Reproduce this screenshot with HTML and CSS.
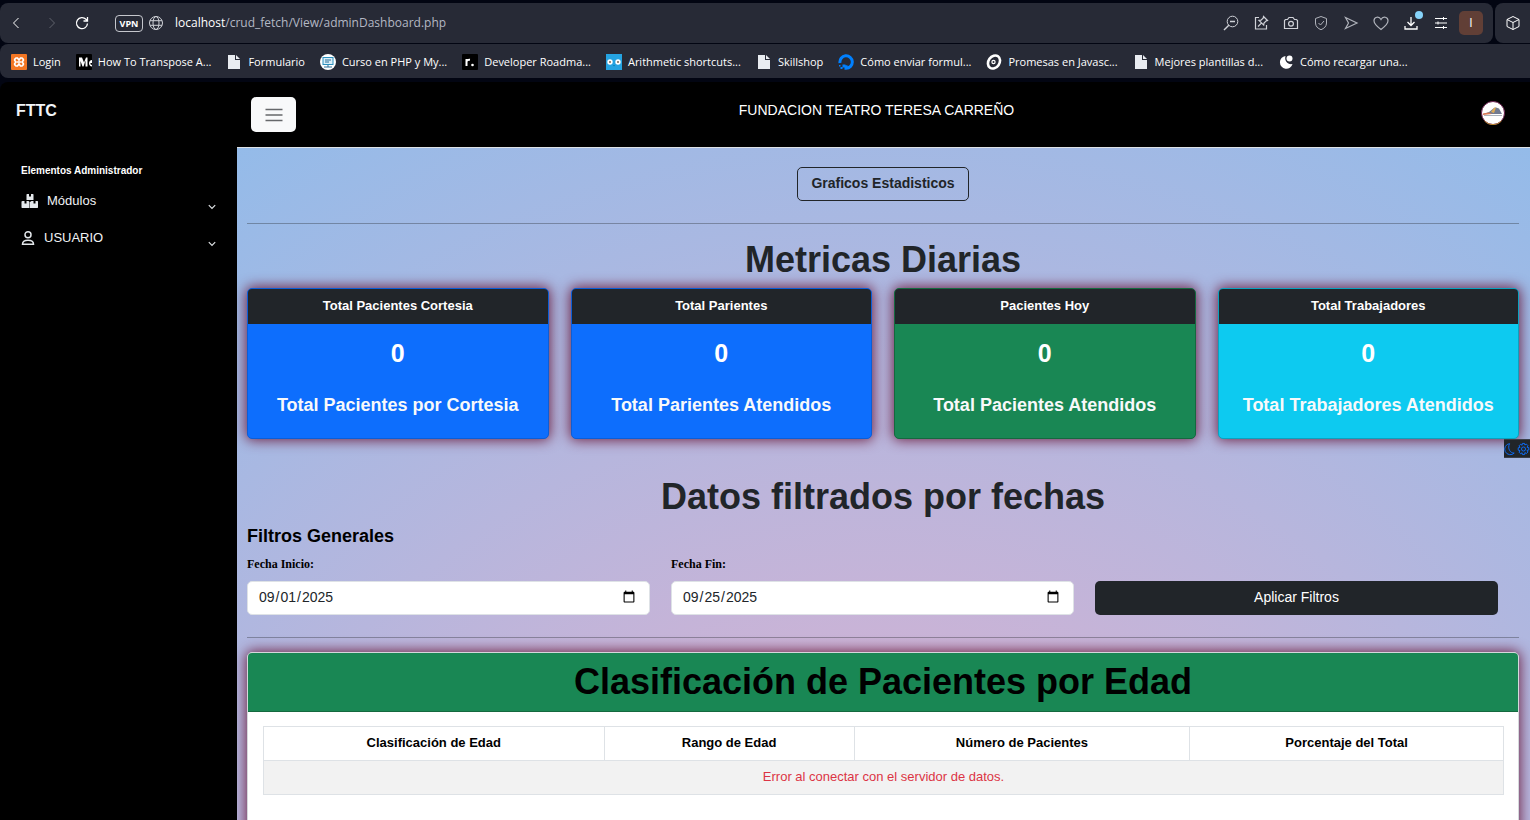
FILE: index.html
```html
<!DOCTYPE html>
<html lang="es">
<head>
<meta charset="utf-8">
<title>FTTC</title>
<link rel="stylesheet" href="styles.css">
</head>
<body>
<svg class="defs" aria-hidden="true">
  <symbol id="file" viewBox="0 0 16 16"><path fill="#e9ecf1" d="M2 1h7v5h5v9H2z"/><path fill="#e9ecf1" d="M10 1l4 4h-4z"/></symbol>
  <symbol id="chevron" viewBox="0 0 8 6"><path d="M.8 1.200L4 4.400l3.200-3.200" fill="none" stroke="#dfe3e6" stroke-width="1.200"/></symbol>
</svg>
<div class="browser">
  <div class="toolbar-row">
    <div class="toolbar">
      <button class="tool nav-btn" aria-label="Atrás"><svg viewBox="0 0 16 16"><path d="M10.500 3L5.500 8l5 5"/></svg></button>
      <button class="tool nav-btn dim" aria-label="Adelante"><svg viewBox="0 0 16 16"><path d="M5.500 3l5 5-5 5"/></svg></button>
      <button class="tool nav-btn reload" aria-label="Recargar"><svg viewBox="0 0 16 16"><path d="M13.500 8.500A5.500 5.500 0 1 1 12 4.300l1.500 1.500M13.500 2v4h-4" stroke-width="1.300"/></svg></button>
      <span class="vpn">VPN</span>
      <svg class="globe" viewBox="0 0 16 16"><circle cx="8" cy="8" r="6.500"/><ellipse cx="8" cy="8" rx="3" ry="6.500"/><path d="M2 5.700h12M2 10.300h12"/></svg>
      <div class="url"><b>localhost</b>/crud_fetch/View/adminDashboard.php</div>
      <div class="tools">
        <button class="tool" aria-label="Zoom"><svg viewBox="0 0 16 16"><circle cx="9.500" cy="6.500" r="5.300"/><path d="M5.800 10.200L1 15M7 6.500h5" stroke-width="1.400"/></svg></button>
        <button class="tool" aria-label="Editar"><svg viewBox="0 0 16 16"><path d="M6 2.500H2.500v11.500h11V10M5 11.500l3.200-3.200M10.500 1.500l4 4-1.200.3-2.300 2.300-.3 2L6 5.500l2-.3 2.300-2.300z" stroke-width="1.200"/></svg></button>
        <button class="tool" aria-label="Captura"><svg viewBox="0 0 16 16"><path d="M2.500 4.500h2L6 2.500h4l1.500 2h2l1 1v8h-13v-8z" stroke-width="1.200"/><circle cx="8" cy="8.700" r="2.400" stroke-width="1.200"/></svg></button>
        <button class="tool soft" aria-label="Protección"><svg viewBox="0 0 16 16"><path d="M8 1.500l5.500 2V8c0 3.500-2.500 5.500-5.500 6.700C5 13.500 2.500 11.500 2.500 8V3.500zM5.500 8l2 2 3.500-4"/></svg></button>
        <button class="tool soft" aria-label="Enviar"><svg viewBox="0 0 16 16"><path d="M2.500 2.500L14 8 2.500 13.500l3-5.500z" stroke-width="1.200"/></svg></button>
        <button class="tool soft" aria-label="Favorito"><svg viewBox="0 0 16 16"><path d="M8 14.500C4 11.500 1 9 1 5.800 1 1.800 6 .8 8 4.500 10 .8 15 1.800 15 5.800 15 9 12 11.500 8 14.500z" stroke-width="1.200"/></svg></button>
        <button class="tool bright download" aria-label="Descargas"><svg viewBox="0 0 16 16"><path d="M8 2v8M4.500 7L8 10.500 11.500 7M2 11v3h12v-3" stroke-width="1.300"/></svg></button>
        <button class="tool bright" aria-label="Ajustes"><svg viewBox="0 0 16 16"><path d="M2 3.500h12M2 8h12M2 12.500h12M10.500 2v3M5 6.500v3M10.500 11v3"/></svg></button>
        <button class="profile" aria-label="Perfil">I</button>
      </div>
    </div>
    <div class="side-tools"><button class="tool bright" aria-label="Extensiones"><svg viewBox="0 0 16 16"><path d="M8 1.500l6 3v7l-6 3-6-3v-7zM2 4.500l6 3 6-3M8 7.500v7"/></svg></button></div>
  </div>
  <nav class="bookmarks">
    <a href="#"><svg viewBox="0 0 16 16"><rect width="16" height="16" rx="1" fill="#f37623"/><path d="M5 4h1.500L8 6l1.500-2H11l1.300 1.300v1.200L11 8l1.300 1.500v1.200L11 12H9.500L8 10l-1.500 2H5l-1.300-1.300V9.500L5 8 3.700 6.500V5.300zM6 8h4" fill="none" stroke="#fff" stroke-width="1.700"/></svg>Login</a>
    <a href="#"><svg viewBox="0 0 16 16"><rect width="16" height="16" rx="1" fill="#000"/><path d="M3 3.500h3l2 5 2-5h1.500v9h-2v-6l-2 6h-1L4.500 7v5.500H3zM16 6c-4 0-4 6.500 0 6.500V11c-2-.5-1.500-1-1.500-2H16z" fill="#fff"/></svg>How To Transpose A...</a>
    <a href="#"><svg><use href="#file"/></svg>Formulario</a>
    <a href="#"><svg viewBox="0 0 16 16"><circle cx="8" cy="8" r="8" fill="#fff"/><rect x="3" y="3.500" width="10" height="7" fill="#d8eef8" stroke="#2b8fbd"/><path d="M5 6h6M5 8h4M8 11v2M4 13h8" stroke="#2b6f98" fill="none"/></svg>Curso en PHP y My...</a>
    <a href="#"><svg viewBox="0 0 16 16"><rect width="16" height="16" rx="1" fill="#000"/><path d="M4.500 5v7M4.500 8c0-2 1.500-2.500 3.500-2.300" fill="none" stroke="#fff" stroke-width="2"/><circle cx="10.500" cy="11" r="1.300" fill="#fff"/></svg>Developer Roadma...</a>
    <a href="#"><svg viewBox="0 0 16 16"><rect width="16" height="16" fill="#25a3e1"/><circle cx="4" cy="8" r="2.700" fill="#fff"/><circle cx="12" cy="8" r="2.700" fill="#fff"/><circle cx="4" cy="8" r="1" fill="#765"/><circle cx="12" cy="8" r="1" fill="#765"/><path d="M7 11h2l-1 1.500z" fill="#087aae"/></svg>Arithmetic shortcuts...</a>
    <a href="#"><svg><use href="#file"/></svg>Skillshop</a>
    <a href="#"><svg viewBox="0 0 16 16"><path d="M2 9a6.200 6.200 0 1 1 6 5.200v-3" fill="none" stroke="#0080ff" stroke-width="3"/><path d="M4.500 10.500h3v3h-3zM2.500 13h2v2h-2zM1 11h1.500v1.500H1z" fill="#0080ff"/></svg>Cómo enviar formul...</a>
    <a href="#"><svg viewBox="0 0 16 16"><ellipse cx="8" cy="8" rx="5.500" ry="7" transform="rotate(35 8 8)" fill="none" stroke="#fff" stroke-width="2.600"/><circle cx="7.500" cy="8" r="1.600" fill="none" stroke="#fff" stroke-width="1.200"/></svg>Promesas en Javasc...</a>
    <a href="#"><svg><use href="#file"/></svg>Mejores plantillas d...</a>
    <a href="#"><svg viewBox="0 0 16 16"><path d="M7.500 2a6.400 6.400 0 1 0 7 8C10 11 6 7 7.500 2z" fill="#fff"/><circle cx="11.500" cy="4.500" r="3" fill="#fff"/></svg>Cómo recargar una...</a>
  </nav>
</div>
<div class="app">
  <aside class="sidebar">
    <a class="brand" href="#">FTTC</a>
    <h2 class="menu-title">Elementos Administrador</h2>
    <button class="menu-item"><svg class="ico" viewBox="0 0 18 16"><path fill="#e4e8ec" d="M6 1h2v2.500h2V1h2l.5.500V7h-7V1.500zM1.500 8h2v2.500h2V8h2l1 1v6h-7.500l-.5-.5V8.500zM10.500 8h2v2.500h2V8h2l.5.500v6l-.5.500H9V9z"/></svg><span>Módulos</span><svg class="chev"><use href="#chevron"/></svg></button>
    <button class="menu-item user"><svg class="ico" viewBox="0 0 16 16"><g fill="none" stroke="#e4e8ec" stroke-width="1.500"><circle cx="7" cy="4.700" r="3"/><path d="M1.500 14.200c0-3 2-4 5.500-4s5.500 1 5.500 4z"/></g></svg><span>USUARIO</span><svg class="chev"><use href="#chevron"/></svg></button>
  </aside>
  <div class="page">
    <header class="topbar">
      <button class="burger" aria-label="Menú"><svg viewBox="0 0 18 14"><path d="M.5 1.500h17M.5 7h17M.5 12.500h17" stroke="#66686b" stroke-width="1.400"/></svg></button>
      <span class="org">FUNDACION TEATRO TERESA CARREÑO</span>
      <svg class="avatar" viewBox="0 0 24 24"><circle cx="12" cy="12" r="11.500" fill="#fff" stroke="#6b2150"/><path d="M3.500 19.800c4 5 13 5 17 0" fill="none" stroke="#b8862e"/><path d="M2 13l6-2 5-4 2-.5 3 1 3 5.500z" fill="#727b91"/><path d="M10 11l3.500-4.500h1.500L13 12z" fill="#e0ac55"/><path d="M2 12.500l6-1 3 1.500-9 1z" fill="#dc7954"/><path d="M3 14.500h18" stroke="#aab1bb"/></svg>
    </header>
    <main class="content">
      <div class="actions"><button class="outline">Graficos Estadisticos</button></div>
      <hr>
      <h1>Metricas Diarias</h1>
      <section class="cards">
        <article class="card blue"><h3>Total Pacientes Cortesia</h3><strong>0</strong><p>Total Pacientes por Cortesia</p></article>
        <article class="card blue"><h3>Total Parientes</h3><strong>0</strong><p>Total Parientes Atendidos</p></article>
        <article class="card green"><h3>Pacientes Hoy</h3><strong>0</strong><p>Total Pacientes Atendidos</p></article>
        <article class="card cyan"><h3>Total Trabajadores</h3><strong>0</strong><p>Total Trabajadores Atendidos</p></article>
      </section>
      <h1>Datos filtrados por fechas</h1>
      <h2 class="subtitle">Filtros Generales</h2>
      <form class="filters">
        <div class="field"><label for="start">Fecha Inicio:</label><input id="start" type="date" value="2025-09-01"></div>
        <div class="field"><label for="end">Fecha Fin:</label><input id="end" type="date" value="2025-09-25"></div>
        <button class="apply" type="button">Aplicar Filtros</button>
      </form>
      <hr>
      <section class="panel">
        <h1>Clasificación de Pacientes por Edad</h1>
        <div class="panel-body">
          <table>
            <thead><tr><th>Clasificación de Edad</th><th>Rango de Edad</th><th>Número de Pacientes</th><th>Porcentaje del Total</th></tr></thead>
            <tbody><tr><td colspan="4">Error al conectar con el servidor de datos.</td></tr></tbody>
          </table>
        </div>
      </section>
    </main>
  </div>
</div>
<button class="theme" aria-label="Cambiar tema">
  <svg viewBox="0 0 14 14"><path d="M6 1.200a6 6 0 1 0 5 10.200C6.500 11.500 3.500 6.500 6 1.200z"/></svg>
  <svg viewBox="0 0 14 14"><path d="M5.800 1h2.400l.3 1.700 1.600-1 1.700 1.700-1 1.700 1.900.4v2.600l-1.900.4 1 1.700-1.700 1.700-1.600-1L8.200 13H5.800l-.3-1.900-1.600 1-1.700-1.700 1-1.700-1.900-.4V5.700l1.900-.4-1-1.700 1.700-1.700 1.600 1z"/><circle cx="7" cy="7" r="2.200"/></svg>
</button>
</body>
</html>
```
FILE: styles.css
```css
* { box-sizing: border-box; }
body {
  margin: 0;
  height: 100vh;
  display: flex;
  flex-direction: column;
  overflow: hidden;
  background: #020512;
  font: 14px/22px "Liberation Sans", Arial, sans-serif;
  color: #212529;
}
button { font: inherit; border: 0; padding: 0; background: none; color: inherit; }
h1, h2, h3, p { margin: 0; }
a { color: inherit; text-decoration: none; }
.defs { position: absolute; width: 0; height: 0; }

/* Browser chrome */
.browser { flex: none; padding-top: 3px; color: #fff; font-family: "Open Sans", "Noto Sans", sans-serif; }
.toolbar-row { display: flex; gap: 2px; height: 40px; }
.toolbar {
  flex: 1;
  display: flex;
  align-items: center;
  padding: 0 10px 0 8px;
  background: #272a36;
  border-radius: 8px;
}
.side-tools {
  width: 35px;
  display: flex;
  align-items: center;
  padding-left: 10px;
  background: #272a36;
  border-radius: 8px 0 0 8px;
}
.tool { width: 16px; height: 16px; display: flex; position: relative; }
.tool svg, .globe { width: 16px; height: 16px; fill: none; stroke: #d0d2d8; stroke-width: 1; }
.tool.bright svg { stroke: #fff; }
.tool.soft svg { stroke: #b0b3bb; }
.nav-btn { margin-right: 20px; }
.nav-btn svg { stroke: #fff; }
.nav-btn.dim { margin-right: 14px; }
.nav-btn.dim svg { stroke: #60636d; }
.nav-btn.reload { margin-right: 25px; }
.vpn {
  width: 28px;
  height: 17px;
  border: 1px solid #c5c7cd;
  border-radius: 4px;
  font: bold 9px/15px "Open Sans", sans-serif;
  text-align: center;
}
.globe { margin: 0 11px 0 5px; }
.url { flex: 1; font-size: 12px; color: #b4b8c4; }
.url b { font-weight: 400; color: #fff; }
.tools { display: flex; align-items: center; gap: 14px; }
.download::after {
  content: "";
  position: absolute;
  right: -4px;
  top: -4px;
  width: 8px;
  height: 8px;
  border-radius: 50%;
  background: #86d3fa;
}
.profile { width: 24px; height: 24px; margin-left: -4px; border-radius: 5px; background: #613f36; font-size: 12px; }
.bookmarks {
  display: flex;
  align-items: center;
  gap: 15px;
  height: 34px;
  margin: 1px 0 4px;
  padding: 2px 11px 0;
  background: #272a36;
  border-radius: 8px 0 0 8px;
  font-size: 11px;
  white-space: nowrap;
}
.bookmarks a { display: flex; align-items: center; gap: 6px; }
.bookmarks svg { width: 16px; height: 16px; flex: none; }

/* Application */
.app { flex: 1; display: flex; min-height: 0; background: #000; border-radius: 8px 0 0 0; }
.sidebar { flex: none; width: 237px; padding: 17px 16px; color: #fff; font-size: 13px; }
.brand { display: block; font-size: 16px; line-height: 24px; font-weight: 700; color: #f1f5f8; }
.menu-title { margin: 38px 0 8px 5px; font-size: 10px; line-height: 20px; }
.menu-item { display: flex; align-items: center; width: 200px; height: 37px; padding-left: 5px; padding-bottom: 14px; color: #f1f3f5; }
.menu-item .ico { width: 18px; height: 16px; margin-right: 8px; }
.menu-item.user .ico { width: 16px; margin-right: 7px; }
.chev { width: 8px; height: 6px; margin: 12px 0 0 auto; }
.page { flex: 1; min-width: 0; display: flex; flex-direction: column; }
.topbar { flex: none; display: flex; align-items: center; height: 66px; padding: 0 25px 0 14px; border-bottom: 1px solid #dee2e6; color: #fff; }
.burger { width: 45px; height: 35px; display: flex; align-items: center; justify-content: center; border-radius: 5px; background: #f8f9fa; }
.burger svg { width: 18px; height: 14px; }
.org { flex: 1; text-align: center; padding: 0 24px 10px 0; }
.avatar { width: 24px; height: 24px; margin-bottom: 4px; }

.content {
  flex: 1;
  min-height: 0;
  overflow: hidden;
  padding: 19px 11px 0 10px;
  background: radial-gradient(circle 1166px at 50% 970px, #eeaeca 0%, #94bbe9 100%);
}
.actions { display: flex; justify-content: center; }
.outline { height: 34px; padding: 0 13px 2px; border: 1px solid #212529; border-radius: 5px; font-weight: 700; }
hr { margin: 22px 0 14px; border: 0; border-top: 1px solid #212529; opacity: 0.35; }
h1 { font-size: 36px; line-height: 43px; text-align: center; }
.cards { display: grid; grid-template-columns: repeat(4, 1fr); gap: 22px; margin: 7px 0 36px; }
.card, .panel { border-radius: 5px; overflow: hidden; box-shadow: 0 0 13px 1px #6d1f41; }
.card { height: 151px; border: 1px solid; color: #fff; text-align: center; font-weight: 700; }
.card h3 { height: 35px; background: #212529; font-size: 13px; line-height: 33px; }
.card strong { display: block; margin-top: 14px; font-size: 25px; line-height: 30px; }
.card p { margin-top: 26px; font-size: 18px; line-height: 22px; color: #f8f9fa; }
.blue { background: #0d6efd; border-color: #0b5ed7; }
.green { background: #198754; border-color: #14693f; }
.cyan { background: #0dcaf0; border-color: #0aa2c0; }
.subtitle { margin: 7px 0; font-size: 18px; line-height: 22px; color: #000; }
.filters { display: grid; grid-template-columns: repeat(3, 1fr); gap: 21px; padding-right: 21px; align-items: end; }
.field { display: flex; flex-direction: column; }
.field label { height: 27px; font: bold 12px/20px "Liberation Serif", "Times New Roman", serif; color: #000; }
.field input {
  height: 34px;
  padding: 0 11px 2px 10px;
  border: 1px solid #dee2e6;
  border-radius: 5px;
  background: #fff;
  color: #212529;
  font: 14px "Liberation Sans", Arial, sans-serif;
}
.apply { height: 34px; padding-bottom: 2px; border-radius: 5px; background: #212529; color: #fff; }
.panel { min-height: 300px; border: 1px solid #d5d8dc; background: #fff; }
.panel h1 { height: 59px; line-height: 57px; background: #198754; border-bottom: 1px solid #14693f; color: #000; }
.panel-body { padding: 14px 14px 14px 15px; }
table { width: 100%; border-collapse: collapse; font-size: 13px; color: #000; }
th, td { height: 34px; padding: 0 7px 2px; border: 1px solid #dee2e6; text-align: center; }
td { background: #f2f2f2; color: #dc3545; }

.theme {
  position: fixed;
  right: 0;
  top: 439px;
  width: 26px;
  height: 19px;
  display: flex;
  align-items: center;
  background: #212529;
  border: solid #3b3e48;
  border-width: 1px 0;
}
.theme svg { width: 13px; height: 14px; flex: none; fill: none; stroke: #0d6efd; stroke-width: 1; }
```
